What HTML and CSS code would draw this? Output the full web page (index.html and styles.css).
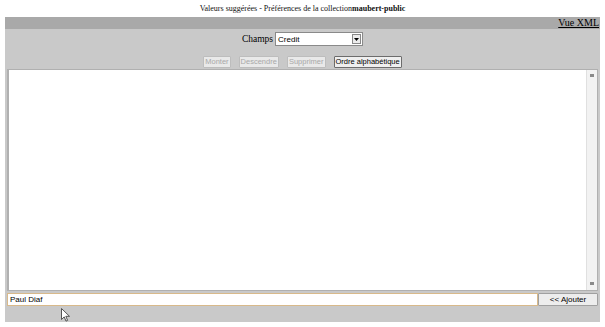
FILE: index.html
```html
<!DOCTYPE html>
<html lang="fr">
<head>
    <meta charset="UTF-8">
    <title>Valeurs suggérées</title>
    <link rel="stylesheet" href="styles.css">
</head>
<body>
    <div class="title">Valeurs suggérées - Préférences de la collection<b>maubert-public</b></div>

    <div class="panel">
        <div class="topbar"><a href="#" class="xml-link">Vue XML</a></div>

        <div class="field-row">
            <span class="field-label">Champs</span>
            <div class="select">
                <span class="select-value">Credit</span>
                <span class="select-arrow">
                    <svg width="7" height="5" viewBox="0 0 7 5"><path d="M1 1h5L3.5 4z" fill="#000"/></svg>
                </span>
            </div>
        </div>

        <div class="actions">
            <button class="btn" disabled>Monter</button>
            <button class="btn" disabled>Descendre</button>
            <button class="btn" disabled>Supprimer</button>
            <button class="btn active">Ordre alphabétique</button>
        </div>

        <div class="list">
            <div class="list-body"></div>
            <div class="scrollbar">
                <span class="scroll-arrow up"></span>
                <span class="scroll-arrow down"></span>
            </div>
        </div>

        <div class="add-row">
            <input class="add-input" type="text" value="Paul Diaf">
            <button class="btn add-btn">&lt;&lt; Ajouter</button>
        </div>
    </div>

    <!-- curseur de la souris -->
    <svg class="cursor" width="10" height="14" viewBox="0 0 10 14">
        <path d="M0.5 0.5v11l2.7-2.6 1.8 4.2 1.6-0.7-1.8-4.1h3.7z" fill="#fff" stroke="#444" stroke-width="0.9"/>
    </svg>
</body>
</html>
```

FILE: styles.css
```css
:root {
    --panel: #c9c9c9;
    --bar: #a9a9a9;
    --border: #9a9a9a;
}

body {
    margin: 0;
    background: #fff;
    font-family: 'Liberation Serif', 'Times New Roman', serif;
    color: #000;
    position: relative;
    height: 100vh;
}

.title {
    height: 17px;
    line-height: 18px;
    text-align: center;
    font-size: 8px;
    color: #111;
}

.panel {
    margin: 0 5px 0 5px;
    background-color: var(--panel);
    height: 305px;
    display: flex;
    flex-direction: column;
}

.topbar {
    height: 12px;
    background-color: var(--bar);
    display: flex;
    justify-content: flex-end;
    align-items: center;
    padding-right: 1px;
}

.xml-link {
    font-size: 10px;
    color: #000;
    text-decoration: underline;
    line-height: 12px;
}

.field-row {
    display: flex;
    justify-content: center;
    align-items: center;
    gap: 2px;
    margin-top: 3px;
    height: 14px;
}

.field-label {
    font-size: 9.5px;
}

.select {
    width: 86px;
    height: 12px;
    background: #fff;
    border: 1px solid #8a8a8a;
    display: flex;
    align-items: center;
    font-family: 'Liberation Sans', Arial, sans-serif;
    font-size: 8px;
}

.select-value {
    flex: 1;
    padding-left: 2px;
}

.select-arrow {
    width: 9px;
    height: 10px;
    margin-right: 1px;
    border: 1px solid #888;
    background: #ececec;
    box-sizing: border-box;
    display: flex;
    justify-content: center;
    align-items: center;
}

.actions {
    display: flex;
    justify-content: center;
    gap: 8px;
    margin-top: 10px;
    height: 13px;
}

.btn {
    font-family: 'Liberation Sans', Arial, sans-serif;
    font-size: 7.5px;
    padding: 0 1px;
    height: 12px;
    line-height: 10px;
    background: #efefef;
    border: 1px solid #a0a0a0;
    border-radius: 1px;
    color: #000;
}

.btn:disabled {
    color: #a8a8a8;
    background: #e9e9e9;
    border-color: #bdbdbd;
}

.btn.active {
    border-color: #6c6c6c;
}

.list {
    margin: 0 2px 0 2px;
    height: 222px;
    background: #fff;
    border: 1px solid #b0b0b0;
    border-left-width: 2px;
    display: flex;
    box-sizing: border-box;
}

.list-body {
    flex: 1;
}

.scrollbar {
    width: 10px;
    background: #f2f2f2;
    border-left: 1px solid #e0e0e0;
    display: flex;
    flex-direction: column;
    justify-content: space-between;
    align-items: center;
    padding: 4px 0 5px;
}

.scroll-arrow {
    width: 4px;
    height: 3px;
    background: #8a8a8a;
}

.add-row {
    display: flex;
    margin: 2px 2px 0 2px;
    height: 13px;
}

.add-input {
    flex: 1;
    height: 13px;
    box-sizing: border-box;
    border: 1px solid #d8b98a;
    padding: 0 2px;
    font-family: 'Liberation Sans', Arial, sans-serif;
    font-size: 8px;
    background: #fff;
    outline: none;
    margin: 0;
}

.add-btn {
    width: 60px;
    height: 13px;
    margin: 0;
    padding: 0;
    font-size: 8px;
    background: #ededed;
    border: 1px solid #a0a0a0;
}

.cursor {
    position: absolute;
    left: 61px;
    top: 308px;
}
```
